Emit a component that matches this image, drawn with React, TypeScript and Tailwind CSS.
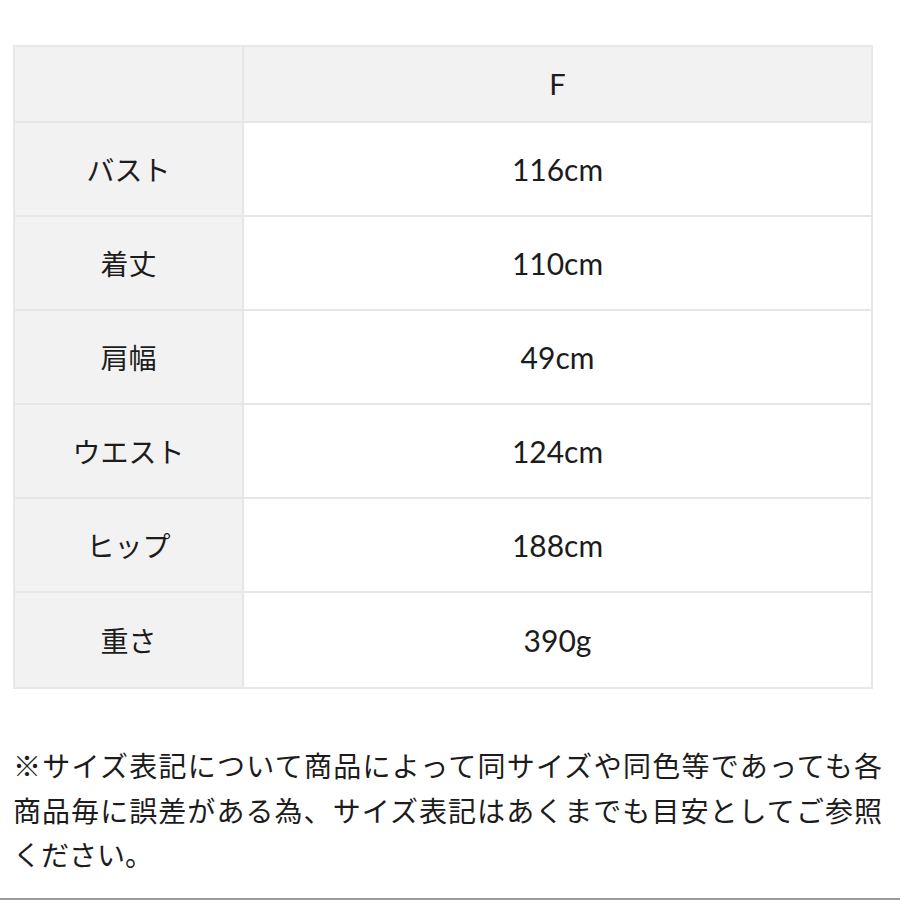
import React from "react";

const rows = [
  { label: "バスト", value: "116cm" },
  { label: "着丈", value: "110cm" },
  { label: "肩幅", value: "49cm" },
  { label: "ウエスト", value: "124cm" },
  { label: "ヒップ", value: "188cm" },
  { label: "重さ", value: "390g" },
];

const font = { fontFamily: '"Noto Sans CJK JP", "Noto Sans", sans-serif' };
const latin = { fontFamily: 'Lato, "Noto Sans CJK JP", sans-serif' };

export default function App() {
  return (
    <div
      className="min-h-[900px] w-[900px] bg-white flex flex-col text-[#1c1c1c]"
      style={font}
    >
      <div className="ml-[13px] mt-[45px] w-[860px] border-2 border-[#e8e8e8] grid grid-cols-[229px_1fr]">
        <div className="h-[76px] bg-[#f2f2f2] border-r-2 border-b-2 border-[#e6e6e6]" />
        <div
          className="h-[76px] bg-[#f2f2f2] border-b-2 border-[#e6e6e6] flex items-center justify-center text-[29px]"
          style={latin}
        >
          F
        </div>
        {rows.map((r, i) => (
          <React.Fragment key={r.label}>
            <div
              className={`h-[94px] bg-[#f2f2f2] border-r-2 border-[#e6e6e6] flex items-center justify-center text-[28px] ${
                i < rows.length - 1 ? "border-b-2" : ""
              }`}
            >
              {r.label}
            </div>
            <div
              className={`h-[94px] bg-white border-[#e6e6e6] flex items-center justify-center text-[30px] ${
                i < rows.length - 1 ? "border-b-2" : ""
              }`}
              style={latin}
            >
              {r.value}
            </div>
          </React.Fragment>
        ))}
      </div>
      <div className="ml-[13px] mt-[54px] w-[869px] text-[28px] leading-[44.5px]">
        <span className="block [text-align-last:justify]">
          ※サイズ表記について商品によって同サイズや同色等であっても各
        </span>
        <span className="block [text-align-last:justify]">
          商品毎に誤差がある為、サイズ表記はあくまでも目安としてご参照
        </span>
        <span className="block">ください。</span>
      </div>
      <div className="mt-auto h-[2px] bg-[#9a9a9a]" />
    </div>
  );
}
